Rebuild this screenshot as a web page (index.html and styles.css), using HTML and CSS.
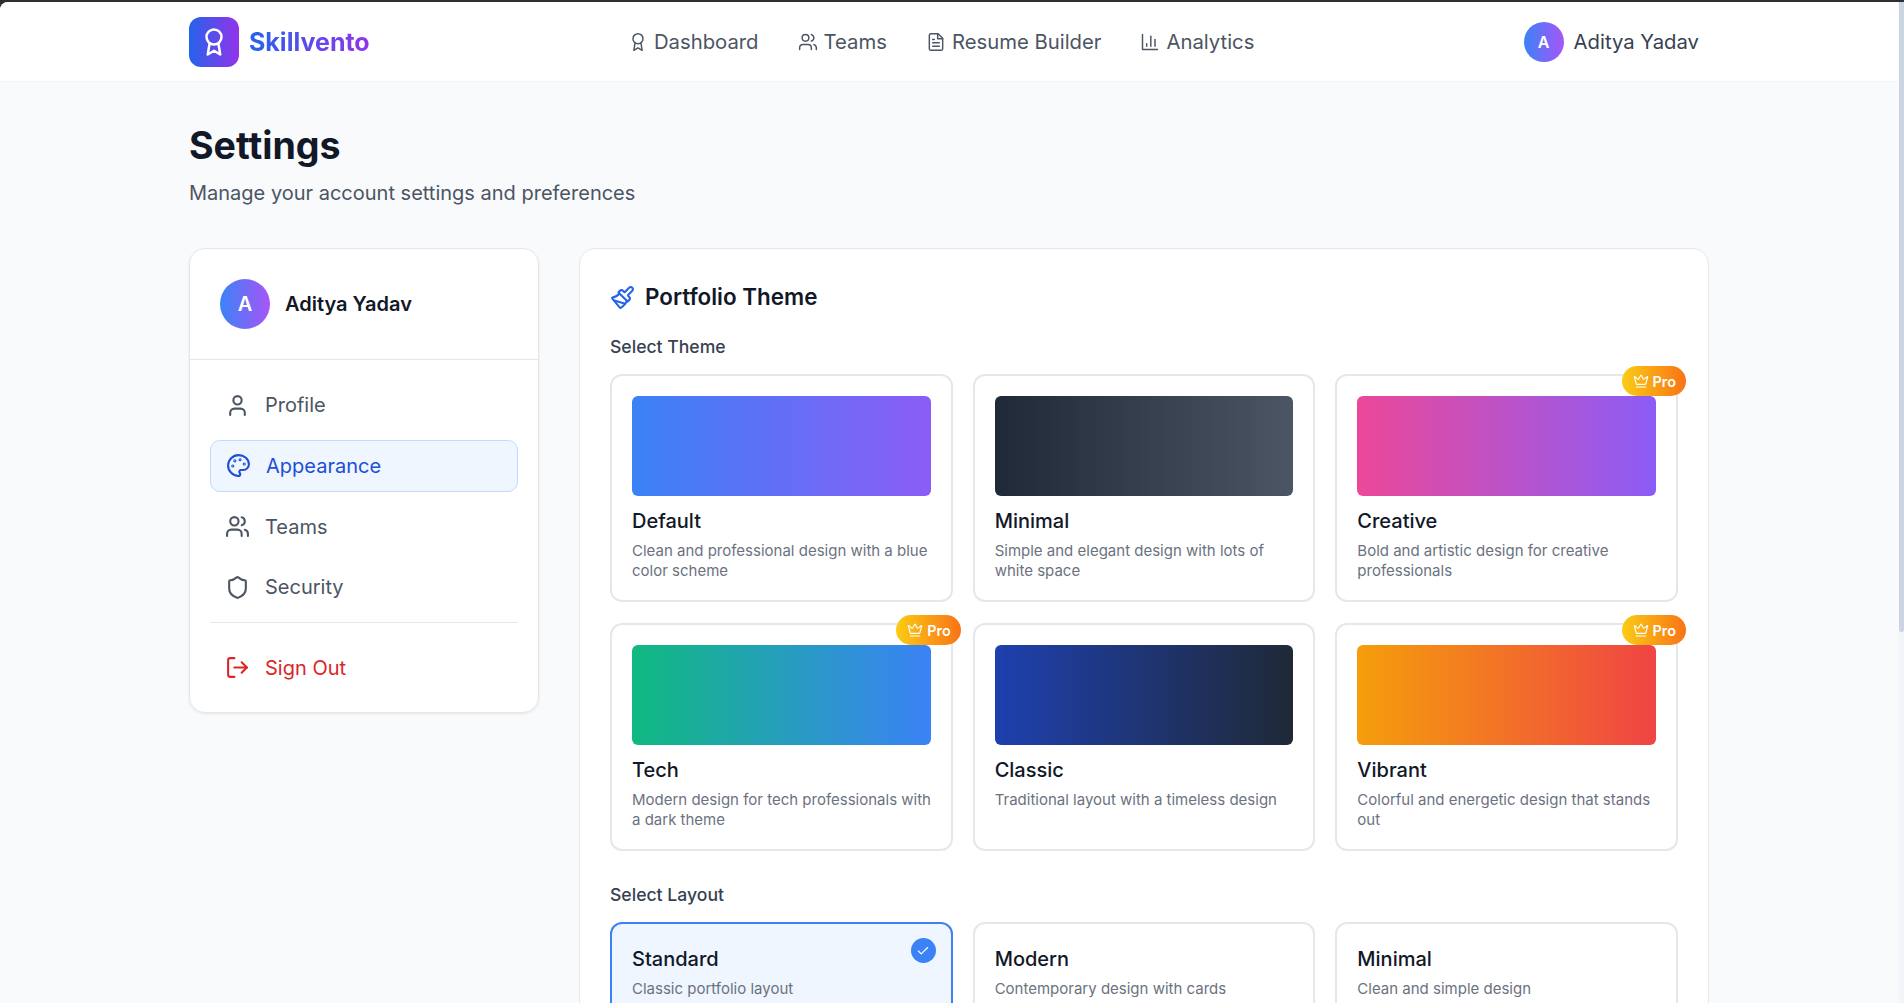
FILE: index.html

```html
<!DOCTYPE html>
<html lang="en">
<head>
    <meta charset="UTF-8">
    <meta name="viewport" content="width=device-width, initial-scale=1.0">
    <title>Settings - Skillvento</title>
    <link rel="stylesheet" href="styles.css">
</head>
<body>
    <!-- Icon sprites -->
    <svg class="sprites" xmlns="http://www.w3.org/2000/svg">
        <symbol id="i-award" viewBox="0 0 24 24"><circle cx="12" cy="8" r="6"/><path d="M15.477 12.89 17 22l-5-3-5 3 1.523-9.11"/></symbol>
        <symbol id="i-users" viewBox="0 0 24 24"><path d="M16 21v-2a4 4 0 0 0-4-4H6a4 4 0 0 0-4 4v2"/><circle cx="9" cy="7" r="4"/><path d="M22 21v-2a4 4 0 0 0-3-3.87"/><path d="M16 3.13a4 4 0 0 1 0 7.75"/></symbol>
        <symbol id="i-file" viewBox="0 0 24 24"><path d="M14.5 2H6a2 2 0 0 0-2 2v16a2 2 0 0 0 2 2h12a2 2 0 0 0 2-2V7.5L14.5 2z"/><path d="M14 2v6h6"/><path d="M16 13H8"/><path d="M16 17H8"/><path d="M10 9H8"/></symbol>
        <symbol id="i-chart" viewBox="0 0 24 24"><path d="M3 3v18h18"/><path d="M18 17V9"/><path d="M13 17V5"/><path d="M8 17v-3"/></symbol>
        <symbol id="i-user" viewBox="0 0 24 24"><path d="M19 21v-2a4 4 0 0 0-4-4H9a4 4 0 0 0-4 4v2"/><circle cx="12" cy="7" r="4"/></symbol>
        <symbol id="i-palette" viewBox="0 0 24 24"><circle cx="13.5" cy="6.5" r=".5"/><circle cx="17.5" cy="10.5" r=".5"/><circle cx="8.5" cy="7.5" r=".5"/><circle cx="6.5" cy="12.5" r=".5"/><path d="M12 2C6.5 2 2 6.5 2 12s4.5 10 10 10c.926 0 1.648-.746 1.648-1.688 0-.437-.18-.835-.437-1.125-.29-.289-.438-.652-.438-1.125a1.64 1.64 0 0 1 1.668-1.668h1.996c3.051 0 5.555-2.503 5.555-5.554C21.965 6.012 17.461 2 12 2z"/></symbol>
        <symbol id="i-shield" viewBox="0 0 24 24"><path d="M20 13c0 5-3.5 7.5-7.66 8.95a1 1 0 0 1-.67-.01C7.5 20.5 4 18 4 13V6a1 1 0 0 1 1-1c2 0 4.5-1.2 6.24-2.72a1.17 1.17 0 0 1 1.52 0C14.51 3.81 17 5 19 5a1 1 0 0 1 1 1z"/></symbol>
        <symbol id="i-logout" viewBox="0 0 24 24"><path d="M9 21H5a2 2 0 0 1-2-2V5a2 2 0 0 1 2-2h4"/><polyline points="16 17 21 12 16 7"/><line x1="21" y1="12" x2="9" y2="12"/></symbol>
        <symbol id="i-brush" viewBox="0 0 24 24"><path d="m14.622 17.897-10.68-2.913"/><path d="M18.376 2.622a1 1 0 1 1 3.002 3.002L17.36 9.643a.5.5 0 0 0 0 .707l.944.944a2.41 2.41 0 0 1 0 3.408l-.944.944a.5.5 0 0 1-.707 0L8.354 7.348a.5.5 0 0 1 0-.707l.944-.944a2.41 2.41 0 0 1 3.408 0l.944.944a.5.5 0 0 0 .707 0z"/><path d="M9 8c-1.804 2.71-3.97 3.46-6.583 3.948a.507.507 0 0 0-.302.819l7.32 8.883a1 1 0 0 0 1.185.204C12.735 20.405 16 16.792 16 15"/></symbol>
        <symbol id="i-crown" viewBox="0 0 24 24"><path d="M11.562 3.266a.5.5 0 0 1 .876 0L15.39 8.87a1 1 0 0 0 1.516.294L21.183 5.5a.5.5 0 0 1 .798.519l-2.834 10.246a1 1 0 0 1-.956.734H5.81a1 1 0 0 1-.957-.734L2.02 6.02a.5.5 0 0 1 .798-.519l4.276 3.664a1 1 0 0 0 1.516-.294z"/><path d="M5 21h14"/></symbol>
        <symbol id="i-check" viewBox="0 0 24 24"><path d="M20 6 9 17l-5-5"/></symbol>
    </svg>

    <div class="page">
        <header class="topbar">
            <div class="topbar-inner">
                <a href="#" class="brand">
                    <span class="brand-mark"><svg class="icon"><use href="#i-award"/></svg></span>
                    <span class="brand-name">Skillvento</span>
                </a>
                <nav class="topnav">
                    <a href="#"><svg class="icon"><use href="#i-award"/></svg>Dashboard</a>
                    <a href="#"><svg class="icon"><use href="#i-users"/></svg>Teams</a>
                    <a href="#"><svg class="icon"><use href="#i-file"/></svg>Resume Builder</a>
                    <a href="#"><svg class="icon"><use href="#i-chart"/></svg>Analytics</a>
                </nav>
                <div class="account">
                    <span class="avatar">A</span>
                    <span>Aditya Yadav</span>
                </div>
            </div>
        </header>

        <main class="content">
            <h1>Settings</h1>
            <p class="subtitle">Manage your account settings and preferences</p>

            <div class="settings">
                <!-- Sidebar -->
                <aside class="sidebar">
                    <div class="sidebar-user">
                        <span class="avatar avatar-lg">A</span>
                        <span class="sidebar-name">Aditya Yadav</span>
                    </div>
                    <div class="sidebar-menu">
                        <a href="#" class="menu-item"><svg class="icon"><use href="#i-user"/></svg>Profile</a>
                        <a href="#" class="menu-item active"><svg class="icon"><use href="#i-palette"/></svg>Appearance</a>
                        <a href="#" class="menu-item"><svg class="icon"><use href="#i-users"/></svg>Teams</a>
                        <a href="#" class="menu-item"><svg class="icon"><use href="#i-shield"/></svg>Security</a>
                        <hr>
                        <a href="#" class="menu-item signout"><svg class="icon"><use href="#i-logout"/></svg>Sign Out</a>
                    </div>
                </aside>

                <!-- Theme Panel -->
                <section class="panel">
                    <h2><svg class="icon"><use href="#i-brush"/></svg>Portfolio Theme</h2>

                    <h3>Select Theme</h3>
                    <div class="option-grid">
                        <div class="option">
                            <div class="swatch swatch-default"></div>
                            <h4>Default</h4>
                            <p>Clean and professional design with a blue color scheme</p>
                        </div>
                        <div class="option">
                            <div class="swatch swatch-minimal"></div>
                            <h4>Minimal</h4>
                            <p>Simple and elegant design with lots of white space</p>
                        </div>
                        <div class="option">
                            <span class="pro"><svg class="icon"><use href="#i-crown"/></svg>Pro</span>
                            <div class="swatch swatch-creative"></div>
                            <h4>Creative</h4>
                            <p>Bold and artistic design for creative professionals</p>
                        </div>
                        <div class="option">
                            <span class="pro"><svg class="icon"><use href="#i-crown"/></svg>Pro</span>
                            <div class="swatch swatch-tech"></div>
                            <h4>Tech</h4>
                            <p>Modern design for tech professionals with a dark theme</p>
                        </div>
                        <div class="option">
                            <div class="swatch swatch-classic"></div>
                            <h4>Classic</h4>
                            <p>Traditional layout with a timeless design</p>
                        </div>
                        <div class="option">
                            <span class="pro"><svg class="icon"><use href="#i-crown"/></svg>Pro</span>
                            <div class="swatch swatch-vibrant"></div>
                            <h4>Vibrant</h4>
                            <p>Colorful and energetic design that stands out</p>
                        </div>
                    </div>

                    <h3 class="layout-title">Select Layout</h3>
                    <div class="option-grid layout-grid">
                        <div class="option selected">
                            <span class="tick"><svg class="icon"><use href="#i-check"/></svg></span>
                            <h4>Standard</h4>
                            <p>Classic portfolio layout</p>
                        </div>
                        <div class="option">
                            <h4>Modern</h4>
                            <p>Contemporary design with cards</p>
                        </div>
                        <div class="option">
                            <h4>Minimal</h4>
                            <p>Clean and simple design</p>
                        </div>
                    </div>
                </section>
            </div>
        </main>

        <div class="scrollbar"><div class="scroll-thumb"></div></div>
    </div>
</body>
</html>
```

FILE: styles.css

```css
/* General Styles */
html, body {
    margin: 0;
    padding: 0;
    height: 100%;
    overflow: hidden;
    background: #2f2f2f;
    font-family: Inter, "Liberation Sans", sans-serif;
}

a {
    color: inherit;
    text-decoration: none;
}

h1, h2, h3, h4, p {
    margin: 0;
}

.sprites {
    display: none;
}

.icon {
    fill: none;
    stroke: currentColor;
    stroke-width: 2;
    stroke-linecap: round;
    stroke-linejoin: round;
    flex-shrink: 0;
}

.page {
    position: relative;
    height: calc(100vh - 2px);
    margin-top: 2px;
    padding-right: 6px;
    box-sizing: border-box;
    overflow: hidden;
    background: #f8fafc;
    border-top-left-radius: 8px;
}

.scrollbar {
    position: absolute;
    top: 0;
    right: 0;
    bottom: 0;
    width: 5px;
    background: #f1f5f9;
}

.scroll-thumb {
    height: 630px;
    background: #cbd5e1;
    border-radius: 0 0 3px 3px;
}

/* Top Bar */
.topbar {
    background: #fff;
    border-bottom: 1px solid #f3f4f6;
}

.topbar-inner {
    width: 1520px;
    height: 79px;
    margin: 0 auto;
    display: flex;
    align-items: center;
    justify-content: space-between;
}

.brand {
    display: flex;
    align-items: center;
    gap: 10px;
}

.brand-mark {
    width: 50px;
    height: 50px;
    border-radius: 12px;
    background: linear-gradient(to right, #2563eb, #9333ea);
    color: #fff;
    display: flex;
    align-items: center;
    justify-content: center;
}

.brand-mark .icon {
    width: 30px;
    height: 30px;
}

.brand-name {
    font-size: 25px;
    font-weight: 700;
    background: linear-gradient(to right, #2563eb, #9333ea);
    -webkit-background-clip: text;
    background-clip: text;
    color: transparent;
}

.topnav {
    display: flex;
    gap: 39px;
    margin-right: 11px;
}

.topnav a {
    display: flex;
    align-items: center;
    gap: 6px;
    font-size: 20.3px;
    color: #4b5563;
}

.topnav .icon {
    width: 20px;
    height: 20px;
    stroke-width: 1.75;
}

.account {
    display: flex;
    align-items: center;
    gap: 10px;
    margin-right: 10px;
    font-size: 20.3px;
    color: #374151;
}

.avatar {
    width: 40px;
    height: 40px;
    border-radius: 50%;
    background: linear-gradient(to right, #3b82f6, #a855f7);
    color: #fff;
    font-size: 16px;
    font-weight: 600;
    display: flex;
    align-items: center;
    justify-content: center;
}

/* Heading */
.content {
    width: 1520px;
    margin: 0 auto;
    padding-top: 41px;
}

h1 {
    font-size: 37.6px;
    line-height: 46px;
    font-weight: 700;
    color: #111827;
}

.subtitle {
    margin-top: 10px;
    font-size: 20px;
    line-height: 28px;
    color: #4b5563;
}

.settings {
    display: grid;
    grid-template-columns: 350px 1fr;
    gap: 40px;
    margin-top: 41px;
    align-items: start;
}

/* Sidebar */
.sidebar {
    background: #fff;
    border: 1px solid #e5e7eb;
    border-radius: 16px;
    box-shadow: 0 1px 3px rgba(0, 0, 0, 0.08);
}

.sidebar-user {
    display: flex;
    align-items: center;
    gap: 15px;
    padding: 30px;
    border-bottom: 1px solid #e5e7eb;
}

.avatar-lg {
    width: 50px;
    height: 50px;
    font-size: 20px;
}

.sidebar-name {
    font-size: 20px;
    font-weight: 600;
    color: #111827;
}

.sidebar-menu {
    display: flex;
    flex-direction: column;
    gap: 8.6px;
    padding: 19.4px 20px 18px;
}

.menu-item {
    display: flex;
    align-items: center;
    gap: 15px;
    height: 52px;
    padding: 0 15px;
    box-sizing: border-box;
    border-radius: 10px;
    font-size: 20px;
    color: #4b5563;
}

.menu-item .icon {
    width: 25px;
    height: 25px;
}

.menu-item.active {
    background: #eff6ff;
    border: 1px solid #bfdbfe;
    color: #1d4ed8;
}

.menu-item.signout {
    color: #dc2626;
    margin-top: 10.4px;
}

.sidebar-menu hr {
    width: 100%;
    margin: 0;
    border: none;
    border-top: 1px solid #e5e7eb;
}

/* Theme Panel */
.panel {
    height: 900px;
    padding: 33px 30px 30px;
    background: #fff;
    border: 1px solid #e5e7eb;
    border-radius: 16px;
}

.panel h2 {
    display: flex;
    align-items: center;
    gap: 10px;
    font-size: 22.4px;
    line-height: 30px;
    font-weight: 600;
    color: #111827;
}

.panel h2 .icon {
    width: 25px;
    height: 25px;
    color: #2563eb;
}

.panel h3 {
    margin: 22px 0 14px;
    font-size: 17.6px;
    line-height: 26px;
    font-weight: 500;
    color: #374151;
}

.panel h3.layout-title {
    margin-top: 31px;
}

.option-grid {
    display: grid;
    grid-template-columns: repeat(3, 1fr);
    gap: 21px 20px;
}

.option {
    position: relative;
    padding: 20px 20px 19px;
    background: #fff;
    border: 2px solid #e5e7eb;
    border-radius: 12px;
}

.layout-grid .option {
    padding-top: 22px;
}

.option.selected {
    background: #eff6ff;
    border-color: #3b82f6;
}

.swatch {
    height: 100px;
    border-radius: 6px;
    margin-bottom: 12px;
}

.swatch-default { background: linear-gradient(to right, #3b82f6, #8b5cf6); }
.swatch-minimal { background: linear-gradient(to right, #1f2937, #4b5563); }
.swatch-creative { background: linear-gradient(to right, #ec4899, #8b5cf6); }
.swatch-tech { background: linear-gradient(to right, #10b981, #3b82f6); }
.swatch-classic { background: linear-gradient(to right, #1e40af, #1f2937); }
.swatch-vibrant { background: linear-gradient(to right, #f59e0b, #ef4444); }

.option h4 {
    font-size: 20px;
    line-height: 26px;
    font-weight: 500;
    color: #111827;
}

.option p {
    margin: 7px -4px 0 0;
    font-size: 15px;
    line-height: 20px;
    color: #6b7280;
}

.pro {
    position: absolute;
    top: -10px;
    right: -10px;
    display: flex;
    align-items: center;
    gap: 4px;
    height: 30px;
    padding: 0 10px 0 11px;
    border-radius: 15px;
    background: linear-gradient(to right, #facc15, #f97316);
    color: #fff;
    font-size: 14.4px;
    font-weight: 600;
}

.pro .icon {
    width: 16px;
    height: 16px;
    stroke-width: 1.75;
}

.tick {
    position: absolute;
    top: 14px;
    right: 15px;
    width: 25px;
    height: 25px;
    border-radius: 50%;
    background: #3b82f6;
    color: #fff;
    display: flex;
    align-items: center;
    justify-content: center;
}

.tick .icon {
    width: 14px;
    height: 14px;
}
```
